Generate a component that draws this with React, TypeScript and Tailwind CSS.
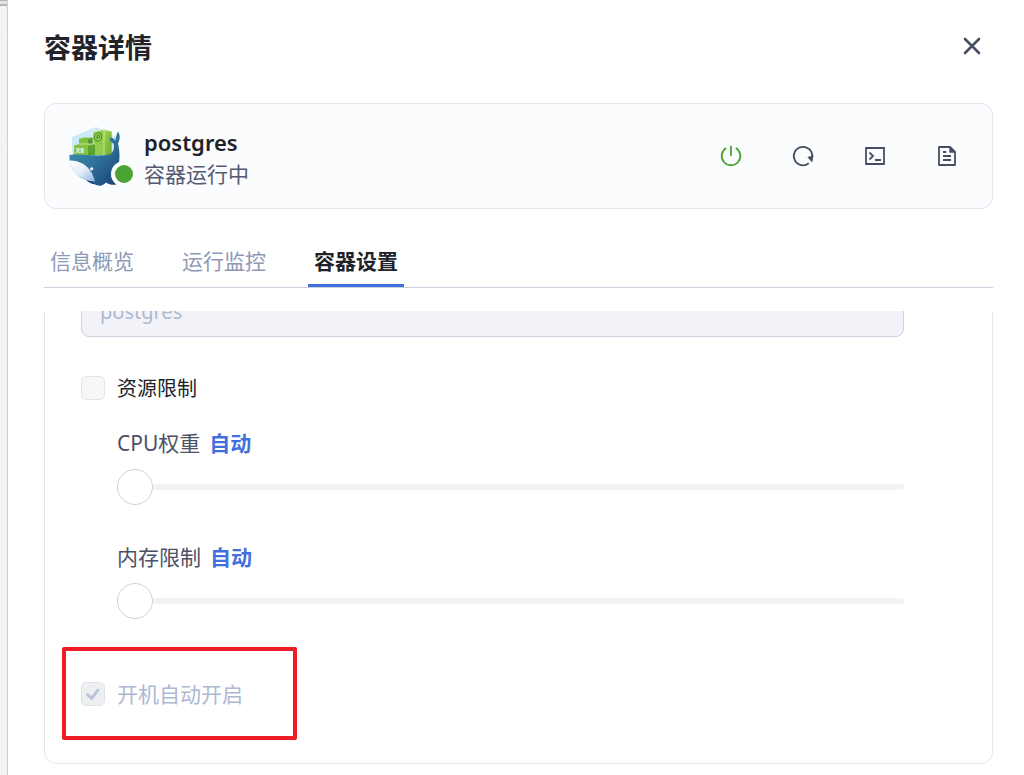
import { useState } from 'react';
import type { ReactNode } from 'react';

const tabs = ['信息概览', '运行监控', '容器设置'];

function ContainerLogo() {
  return (
    <svg viewBox="3 0 60 60" className="w-[60px] h-[60px]" aria-hidden="true">
      <defs>
        <linearGradient id="whale" x1="0" y1="0" x2="1" y2="1">
          <stop offset="0" stopColor="#4397b3" />
          <stop offset="0.5" stopColor="#2f739c" />
          <stop offset="1" stopColor="#163a6c" />
        </linearGradient>
        <linearGradient id="belly" x1="0" y1="0" x2="1" y2="1">
          <stop offset="0" stopColor="#ffffff" />
          <stop offset="0.5" stopColor="#e3edfa" />
          <stop offset="1" stopColor="#8fb2de" />
        </linearGradient>
        <linearGradient id="boxGreen" x1="0" y1="0" x2="1" y2="1">
          <stop offset="0" stopColor="#a3d64f" />
          <stop offset="1" stopColor="#69a92e" />
        </linearGradient>
      </defs>
      <path d="M30 1 L52 12 V30 H6 V11 Z" fill="#cdeafa" />
      {/* stacked boxes */}
      <path d="M13 13 L18 11.500 H27 V19 H13 Z" fill="#7fc043" />
      <path d="M22 14 L27 11.500 V20 H22 Z" fill="#4f9a2b" />
      <path d="M27 6 L38 3.500 V29 H27 Z" fill="#92cc4c" />
      <path d="M38 3.500 L46 5.500 V29 H38 Z" fill="url(#boxGreen)" />
      <path d="M8 19.500 L13 18 H29 V29 H8 Z" fill="#86c146" />
      <path d="M22 20 L29 18 V29 H22 Z" fill="#5ba331" />
      <path d="M27 6 V18 M13 18 H29 M38 3.500 V29 M27 6 L38 3.500 L46 5.500 V29" fill="none" stroke="#e8f6d6" strokeWidth="0.6" />
      <path d="M32 6.500 L35.500 8 V13 L32 15.500 L28.500 13.500 V9 Z" fill="none" stroke="#43872a" strokeWidth="0.9" />
      <path d="M31 13 V9.500 H33.500 V11.500 H31" fill="none" stroke="#43872a" strokeWidth="0.8" />
      <text x="9.500" y="26.500" fontSize="7" fontWeight="700" fill="#f4fbe9" fontFamily="Liberation Sans, sans-serif">XII</text>
      {/* whale */}
      <path d="M20 53 C22 57 27 59 33 58 L32 52 Z" fill="#1b477a" />
      <path
        d="M3.500 29 C14 27.500 30 31 44 28.500 C47.500 26 48.800 21 47.500 17.500 C44.500 16.500 43.500 14 43.500 11.500 C46 11.500 48 12.500 49.500 14.500 C50 10.500 51 7 52 5.500 C54.500 9 54 13.500 52 17.500 C54.500 28 54 39 49.500 47 C52 51 56 53 59 53.500 C54 60 45 60 40 56.500 C38 59 35 60 32 59.500 C29 59 28 57.500 27.500 55.500 C13 54.500 2.500 43 3.500 29 Z"
        fill="url(#whale)"
      />
      <path d="M3.700 34.500 C14 34.500 25 39.500 29 55.500 C15 55 5 46 3.700 34.500 Z" fill="url(#belly)" />
      <circle cx="25.700" cy="42.800" r="1.600" fill="#ffffff" />
    </svg>
  );
}

function ActionButton({ label, className, children }: { label: string; className: string; children: ReactNode }) {
  return (
    <button type="button" aria-label={label} className={className}>
      <svg viewBox="0 0 24 24" className="w-6 h-6" fill="none" stroke="currentColor" strokeWidth="1.8">
        {children}
      </svg>
    </button>
  );
}

function LimitSlider({ id, label }: { id: string; label: string }) {
  const [value, setValue] = useState(0);
  return (
    <div className="pl-9">
      <div className="flex items-center gap-[9px] h-8 text-[21px]">
        <label htmlFor={id} className="text-[#4b5066]">{label}</label>
        <span className="font-bold text-[#416fdd]">{value === 0 ? '自动' : value}</span>
      </div>
      <input
        id={id}
        type="range"
        min={0}
        max={100}
        value={value}
        onChange={(e) => setValue(Number(e.target.value))}
        className="block w-full h-9 mt-[9px] appearance-none bg-transparent [&::-webkit-slider-runnable-track]:h-[6px] [&::-webkit-slider-runnable-track]:rounded-full [&::-webkit-slider-runnable-track]:bg-[#f2f3f5] [&::-webkit-slider-thumb]:appearance-none [&::-webkit-slider-thumb]:w-9 [&::-webkit-slider-thumb]:h-9 [&::-webkit-slider-thumb]:-mt-[15px] [&::-webkit-slider-thumb]:rounded-full [&::-webkit-slider-thumb]:border [&::-webkit-slider-thumb]:border-solid [&::-webkit-slider-thumb]:border-[#ccd2e0] [&::-webkit-slider-thumb]:bg-white"
      />
    </div>
  );
}

export default function App() {
  const [active, setActive] = useState('容器设置');
  const [limited, setLimited] = useState(false);

  return (
    <div className="min-h-screen flex bg-[#f4f4f4] font-['Noto_Sans','Noto_Sans_CJK_SC',sans-serif]">
      {/* Page behind the drawer */}
      <div className="w-[7px] shrink-0 overflow-hidden">
        <div className="h-[6px] border-t border-b-2 border-[#b5b5b5] bg-[#e2e2e2]" />
        <div className="mt-[29px] h-[111px] border-y border-[#ececec] rounded-r-lg" />
      </div>

      <main className="flex-1 min-w-0 border-l border-[#cfcfcf] bg-white pl-9 pr-[31px] pb-[11px]">
        {/* Header */}
        <header className="h-[103px] pt-[26px] flex items-start justify-between">
          <h1 className="text-[27px] leading-[44px] font-bold text-[#212328]">容器详情</h1>
          <button type="button" aria-label="关闭" className="w-[42px] h-10 flex items-center justify-center text-[#474d63]">
            <svg viewBox="0 0 24 24" className="w-6 h-6" fill="none" stroke="currentColor" strokeWidth="2.6" strokeLinecap="round">
              <path d="M5 5 L19 19 M19 5 L5 19" />
            </svg>
          </button>
        </header>

        {/* Summary */}
        <section className="h-[106px] pl-6 pr-[33px] flex items-center justify-between border border-[#e0e5f0] rounded-xl bg-[#fbfcfe]">
          <div className="flex items-center gap-[15px]">
            <div className="relative">
              <ContainerLogo />
              <span className="absolute left-[42px] top-[35px] w-[26px] h-[26px] rounded-full border-4 border-[#fbfcfe] bg-[#4ba333]" />
            </div>
            <div className="pt-1">
              <h2 className="text-[22px] leading-8 font-semibold text-[#212328]">postgres</h2>
              <p className="text-[21px] leading-8 text-[#545a72]">容器运行中</p>
            </div>
          </div>
          <div className="flex items-center gap-12">
            <ActionButton label="停止" className="text-[#4ba333]">
              <path d="M7.200 4 A9.300 9.300 0 1 0 16.800 4 M12 1.700 V12" />
            </ActionButton>
            <ActionButton label="重启" className="text-[#474d63]">
              <path d="M17.800 19.200 A9.200 9.200 0 1 1 21.200 12" />
              <path d="M16.300 13 L22.500 11.500 L21.200 18.500 Z" fill="currentColor" stroke="none" />
            </ActionButton>
            <ActionButton label="终端" className="text-[#474d63]">
              <path d="M3 4 H21 V20 H3 Z M6.500 8.500 L10 12 L6.500 15.500 M12 16 H18" />
            </ActionButton>
            <ActionButton label="日志" className="text-[#474d63]">
              <path d="M4 3 H15 L20 8 V21 H4 Z M8 8 H11.300 M8 12 H16 M8 16 H16" strokeLinejoin="round" />
              <path d="M14.300 2.500 V8.700 H21 Z" fill="currentColor" stroke="none" />
            </ActionButton>
          </div>
        </section>

        {/* Tabs */}
        <nav role="tablist" className="mt-[27px] h-[52px] flex gap-9 border-b border-[#cbd0df]">
          {tabs.map((tab) => (
            <button
              key={tab}
              type="button"
              role="tab"
              aria-selected={active === tab}
              onClick={() => setActive(tab)}
              className={
                active === tab
                  ? 'px-[6px] pt-[3px] text-[21px] font-bold text-[#212328] border-b-[3px] border-[#416fdd]'
                  : 'px-[6px] pt-[3px] text-[21px] text-[#8d99b5] border-b-[3px] border-transparent'
              }
            >
              {tab}
            </button>
          ))}
        </nav>

        {/* Settings, scrolled down past the first field label */}
        <div className="mt-[23px] overflow-hidden">
          <form className="-mt-[59px] pt-9 pl-9 pr-[88px] pb-[57px] border border-[#e4e9f1] rounded-xl">
            <input
              type="text"
              aria-label="容器名称"
              value="postgres"
              disabled
              className="block w-full h-12 px-[18px] pb-1 text-[20px] text-[#adb9d0] bg-[#f2f3f9] border border-[#ccd2e0] rounded-lg"
            />

            <label className="mt-[39px] h-6 flex items-center gap-3 text-[20px] text-[#212328]">
              <input
                type="checkbox"
                checked={limited}
                onChange={(e) => setLimited(e.target.checked)}
                className="appearance-none w-6 h-6 rounded-[5px] border border-[#e0e5ee] bg-[#f7f7f8] checked:bg-[#416fdd]"
              />
              <span className="pt-[2px]">资源限制</span>
            </label>

            <div className="mt-7">
              <LimitSlider id="cpu" label="CPU权重" />
            </div>
            <div className="mt-[37px]">
              <LimitSlider id="memory" label="内存限制" />
            </div>

            <div className="relative mt-[63px]">
              <label className="h-6 flex items-center gap-3 text-[21px] text-[#adb9d0]">
                <span className="relative w-6 h-6">
                  <input
                    type="checkbox"
                    checked
                    disabled
                    className="block appearance-none w-6 h-6 rounded-[5px] border border-[#dfe2e9] bg-[#eeeff3]"
                  />
                  <svg viewBox="0 0 24 24" className="absolute inset-0" fill="none" stroke="#bcc6d9" strokeWidth="3" strokeLinecap="round" strokeLinejoin="round">
                    <path d="M6.500 12.500 L10.500 16.500 L17 8" />
                  </svg>
                </span>
                <span className="pt-[2px]">开机自动开启</span>
              </label>
              <div className="absolute -left-[19px] -top-[35px] w-[235px] h-[93px] border-4 border-[#ee1c25] rounded-[2px] pointer-events-none" />
            </div>
          </form>
        </div>
      </main>
    </div>
  );
}
